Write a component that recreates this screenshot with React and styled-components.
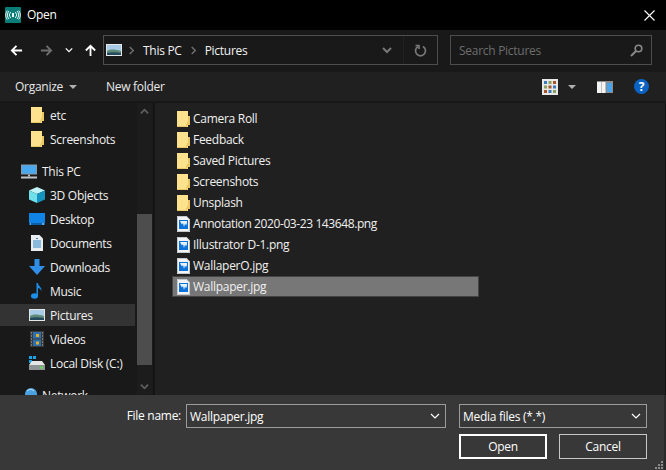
import React from 'react';
import styled, { createGlobalStyle } from 'styled-components';

const GlobalStyle = createGlobalStyle`
  html, body {
    margin: 0;
    padding: 0;
    background: #000;
  }
`;

const Dialog = styled.div`
  width: 666px;
  height: 470px;
  display: flex;
  flex-direction: column;
  overflow: hidden;
  background: #000;
  color: #fff;
  font-family: "Open Sans", "Noto Sans", sans-serif;
  font-size: 12px;
  letter-spacing: -0.28px;
`;

const TitleBar = styled.div`
  height: 30px;
  flex: none;
  display: flex;
  align-items: center;
  padding: 0 11px 0 5px;
  gap: 6px;
`;

const TitleText = styled.span`
  flex: 1;
  margin-bottom: 1px;
`;

const NavBar = styled.div`
  height: 42px;
  flex: none;
  box-sizing: border-box;
  display: flex;
  align-items: center;
  padding: 0 0 2px 9px;
  background: #191919;
`;

const NavButton = styled.div`
  display: flex;
  align-items: center;
  justify-content: center;
  width: ${({ width }) => width}px;
  margin-left: ${({ gap }) => gap || 0}px;
  color: ${({ dim }) => (dim ? '#6e6e6e' : '#fff')};
`;

const AddressBox = styled.div`
  width: 335px;
  height: 30px;
  margin-left: 6px;
  box-sizing: border-box;
  border: 1px solid #4d4d4d;
  display: flex;
  align-items: center;
  padding-left: 2px;
`;

const CrumbSep = styled.span`
  display: flex;
  margin-left: ${({ first }) => (first ? 5 : 0)}px;
  color: #707070;
`;

const Crumb = styled.span`
  color: #f2f2f2;
  margin: 0 7px;
`;

const AddressSpacer = styled.div`
  flex: 1;
`;

const AddressEnd = styled.div`
  width: ${({ width }) => width}px;
  height: 100%;
  display: flex;
  align-items: center;
  justify-content: center;
  color: #777;
  border-right: ${({ divided }) => (divided ? '1px solid #222' : 'none')};
`;

const SearchBox = styled.div`
  width: 202px;
  height: 30px;
  margin-left: 12px;
  box-sizing: border-box;
  border: 1px solid #4d4d4d;
  display: flex;
  align-items: center;
  justify-content: space-between;
  padding: 0 8px;
  color: #6d6d6d;
`;

const ToolBar = styled.div`
  height: 29px;
  flex: none;
  display: flex;
  align-items: center;
  padding: 0 17px 0 15px;
  background: #202020;
  border-bottom: 2px solid #171717;
  color: #e8e8e8;
`;

const ToolLabel = styled.span`
  display: flex;
  align-items: center;
  gap: 6px;
  margin-right: 29px;
`;

const Caret = styled.span`
  width: 0;
  height: 0;
  border-left: 4px solid transparent;
  border-right: 4px solid transparent;
  border-top: 4px solid #b0b0b0;
`;

const ToolSpacer = styled.div`
  flex: 1;
`;

const ViewCaret = styled(Caret)`
  margin: 0 21px 0 10px;
`;

const HelpDot = styled.span`
  width: 15px;
  height: 15px;
  margin-left: 21px;
  border-radius: 50%;
  background: #0a63c4;
  color: #fff;
  font-size: 12px;
  font-weight: 700;
  line-height: 15px;
  text-align: center;
`;

const Content = styled.div`
  flex: 1;
  min-height: 0;
  display: flex;
  border-right: 1px solid #111;
`;

const SidePane = styled.div`
  width: 153px;
  flex: none;
  display: flex;
  background: #191919;
  border-right: 2px solid #141414;
  overflow: hidden;
`;

const SideList = styled.div`
  width: 137px;
  flex: none;
`;

const SideRow = styled.div`
  height: ${({ active }) => (active ? 22 : 24)}px;
  margin: ${({ active }) => (active ? '1px 2px 1px 0' : '0')};
  margin-top: ${({ gapped }) => (gapped ? '8px' : undefined)};
  display: flex;
  align-items: center;
  gap: 5px;
  padding-left: ${({ level }) => (level ? 29 : 21)}px;
  background: ${({ active }) => (active ? '#333' : 'transparent')};
  color: #f0f0f0;
  white-space: nowrap;
`;

const IconSlot = styled.span`
  width: 16px;
  flex: none;
  display: flex;
  justify-content: center;
`;

const ScrollTrack = styled.div`
  width: 15px;
  flex: none;
  display: flex;
  flex-direction: column;
  align-items: center;
  background: #1c1c1c;
  color: #5e5e5e;
`;

const ScrollArrow = styled.div`
  height: 16px;
  display: flex;
  align-items: center;
  justify-content: center;
`;

const ScrollThumb = styled.div`
  width: 15px;
  height: 151px;
  margin-top: 95px;
  margin-bottom: 13px;
  background: #4d4d4d;
`;

const FilePane = styled.div`
  flex: 1;
  background: #202020;
  padding: 5px 0 0 17px;
`;

const FileRow = styled.div`
  width: 307px;
  height: 21px;
  box-sizing: border-box;
  display: flex;
  align-items: center;
  gap: 3px;
  color: #f0f0f0;
  background: ${({ selected }) => (selected ? '#777' : 'transparent')};
  border: ${({ selected }) => (selected ? '1px solid #444' : 'none')};
  padding-left: ${({ selected }) => (selected ? 4 : 5)}px;
  letter-spacing: ${({ tight }) => (tight ? '-0.4px' : 'inherit')};
`;

const BottomPanel = styled.div`
  height: 75px;
  flex: none;
  box-sizing: border-box;
  background: #383838;
  border-right: 2px solid #2a2a2a;
  padding: 9px 17px 0 0;
  display: flex;
  flex-direction: column;
  gap: 6px;
  position: relative;
`;

const NameRow = styled.div`
  display: flex;
  align-items: center;
  justify-content: flex-end;
`;

const FieldLabel = styled.span`
  margin-right: 5px;
  margin-bottom: 1px;
`;

const Field = styled.div`
  width: ${({ width }) => width}px;
  height: 24px;
  box-sizing: border-box;
  border: 1px solid #9b9b9b;
  display: flex;
  align-items: center;
  justify-content: space-between;
  padding: 0 5px 0 3px;
  margin-left: ${({ gap }) => gap || 0}px;
`;

const ButtonRow = styled.div`
  display: flex;
  justify-content: flex-end;
  gap: 12px;
`;

const DialogButton = styled.div`
  width: 88px;
  height: 25px;
  box-sizing: border-box;
  border: ${({ primary }) => (primary ? '2px solid #fff' : '1px solid #c8c8c8')};
  display: flex;
  align-items: center;
  justify-content: center;
`;

const Grip = styled.svg`
  position: absolute;
  right: 0;
  bottom: 0;
`;

const chevronPaths = {
  down: 'M1 3l4 4 4-4',
  up: 'M1 7l4-4 4 4',
  right: 'M3 1l4 4-4 4',
};

const Chevron = ({ size = 9, dir = 'down', width = 1.6 }) => (
  <svg width={size} height={size} viewBox="0 0 10 10" fill="none" stroke="currentColor" strokeWidth={width}>
    <path d={chevronPaths[dir]} />
  </svg>
);

const Arrow = ({ dir, size = 13 }) => {
  const d = {
    left: 'M13 7H2M7 2L2 7l5 5',
    right: 'M1 7h11M7 2l5 5-5 5',
    up: 'M7 13V2M2 7l5-5 5 5',
  }[dir];
  return (
    <svg width={size} height={size} viewBox="0 0 14 14" fill="none" stroke="currentColor" strokeWidth="2">
      <path d={d} />
    </svg>
  );
};

const AppLogo = () => (
  <svg width="16" height="16" viewBox="0 0 16 16">
    <rect width="16" height="16" rx="1" fill="#0a7d78" />
    <rect x="7" y="6" width="2" height="4" fill="#e8f5f4" />
    <g fill="none" stroke="#dff2f1" strokeWidth="1">
      <path d="M5.600 5a4.500 4.500 0 0 0 0 6M10.400 5a4.500 4.500 0 0 1 0 6" />
      <path d="M3.900 4a6.500 6.500 0 0 0 0 8M12.100 4a6.500 6.500 0 0 1 0 8" />
      <path d="M2.200 3.500a8 8 0 0 0 0 9M13.800 3.500a8 8 0 0 1 0 9" />
    </g>
  </svg>
);

const PicturesIcon = () => (
  <svg width="16" height="12" viewBox="0 0 16 12">
    <rect width="16" height="12" fill="#e4e6e8" />
    <rect x="1" y="1" width="14" height="10" fill="#a9cce6" />
    <path d="M1 7c3-2 7-2 14 0v4H1z" fill="#5f8a78" />
    <path d="M1 9c4-1 9-1 14 0v2H1z" fill="#24485c" />
  </svg>
);

const FolderIcon = () => (
  <svg width="13" height="16" viewBox="0 0 13 16">
    <path d="M0 0h11v5h2v8h-2v3H0z" fill="#fee28e" />
    <path d="M0 15h10v-2h3v-1h-2v-1h-1v4z" fill="#e8c35e" />
    <path d="M11 5h2v9h-3v2H0v-1h9v-2h2z" fill="#ecc864" />
  </svg>
);

const ImageFileIcon = () => (
  <svg width="13" height="16" viewBox="0 0 13 16">
    <path d="M0 0h9.500L13 3.500V16H0z" fill="#f2f4f6" />
    <path d="M0.500 0.500h8.800l3.200 3.200V15.500h-12z" fill="none" stroke="#c4c8cc" strokeWidth="1" />
    <rect x="2" y="4" width="9" height="9" fill="#0a72d8" />
    <path d="M3 5h7v2l-1 2.500-1-2-1 3.500-1-4-1 1.500-1-1.500z" fill="#e8f2fb" />
  </svg>
);

const MonitorIcon = () => (
  <svg width="16" height="15" viewBox="0 0 16 15">
    <rect y="0.500" width="16" height="10" fill="#8a9aa8" />
    <rect x="1" y="1.500" width="14" height="8" fill="#4aa8ee" />
    <rect x="7" y="10.500" width="2" height="2" fill="#b8b8b8" />
    <rect y="12.500" width="16" height="2" fill="#c0c4c8" />
  </svg>
);

const CubeIcon = () => (
  <svg width="16" height="16" viewBox="0 0 16 16">
    <path d="M8 0l8 3.500L8 7 0 3.500z" fill="#bff2f6" />
    <path d="M0 3.500L8 7v9L0 12.500z" fill="#6fe0ea" />
    <path d="M16 3.500L8 7v9l8-3.500z" fill="#1593c0" />
  </svg>
);

const DesktopIcon = () => (
  <svg width="16" height="12" viewBox="0 0 16 12">
    <rect width="16" height="12" fill="#0f84e6" />
    <rect y="10" width="16" height="2" fill="#0a5ea8" />
    <rect x="1" y="10.500" width="1" height="1" fill="#cfe8fb" />
    <rect x="13" y="10.500" width="2" height="1" fill="#cfe8fb" />
  </svg>
);

const DocumentIcon = () => (
  <svg width="12" height="16" viewBox="0 0 12 16">
    <path d="M0 0h8.500L12 3.500V16H0z" fill="#e9edf0" />
    <path d="M2 6h8M2 8h8M2 10h8M2 12h8" stroke="#2f86c8" strokeWidth="1" />
    <path d="M5 3.500h2" stroke="#2f86c8" strokeWidth="1" />
  </svg>
);

const DownloadIcon = () => (
  <svg width="16" height="16" viewBox="0 0 16 16">
    <path d="M5.500 0h5v7H16l-8 9-8-9h5.500z" fill="#2f8fe6" />
  </svg>
);

const MusicIcon = () => (
  <svg width="12" height="16" viewBox="0 0 12 16">
    <ellipse cx="3.500" cy="13" rx="3.500" ry="2.800" fill="#1d8ee8" />
    <path d="M5.500 0h1.500c0 3 4 4 3.500 8-.8-2-2.500-3-3.500-3v8H5.500z" fill="#1d8ee8" />
  </svg>
);

const VideoIcon = () => (
  <svg width="14" height="16" viewBox="0 0 14 16">
    <rect width="14" height="16" fill="#3a3a3a" />
    <rect x="3" y="1" width="8" height="6.500" fill="#2d6fb0" />
    <rect x="3" y="8.500" width="8" height="6.500" fill="#2d6fb0" />
    <rect x="6" y="3" width="3" height="3" fill="#d8b02c" />
    <rect x="6" y="10.500" width="3" height="3" fill="#d8b02c" />
    <path d="M1 2h1M1 5h1M1 8h1M1 11h1M1 14h1M12 2h1M12 5h1M12 8h1M12 11h1M12 14h1" stroke="#bbb" strokeWidth="1" />
  </svg>
);

const DiskIcon = () => (
  <svg width="16" height="14" viewBox="0 0 16 14">
    <rect x="0" y="0" width="3" height="3" fill="#16a6e8" />
    <rect x="4" y="0" width="3" height="3" fill="#16a6e8" />
    <rect x="0" y="4" width="3" height="3" fill="#16a6e8" />
    <path d="M3 5h10l3 4H0z" fill="#e6e6e6" />
    <rect y="9" width="16" height="5" fill="#8f9496" />
    <rect x="11" y="10.500" width="3" height="2" fill="#5ee04a" />
  </svg>
);

const NetworkIcon = () => (
  <svg width="16" height="16" viewBox="0 0 16 16">
    <circle cx="10" cy="7" r="6" fill="#4aa3e0" />
    <path d="M6 4c2-2 5-2 7 0" stroke="#cfe9fa" fill="none" />
    <rect x="0" y="9" width="10" height="6" fill="#7db8e0" />
  </svg>
);

const ViewsIcon = () => {
  const colors = ['#3a7ab8', '#8aa060', '#a8552c'];
  return (
    <svg width="16" height="16" viewBox="0 0 16 16">
      <rect width="16" height="16" fill="#e8e8e8" />
      {[0, 1, 2].map((row) =>
        [0, 1, 2].map((col) => (
          <rect key={`${row}${col}`} x={2 + col * 4.500} y={2 + row * 4.500} width="3" height="3" fill={colors[(row + col) % 3]} />
        ))
      )}
    </svg>
  );
};

const PreviewIcon = () => (
  <svg width="16" height="12" viewBox="0 0 16 12">
    <rect width="16" height="12" fill="#8c8c8c" />
    <rect x="0" y="1" width="4" height="11" fill="#f4f4f4" />
    <rect x="4.500" y="1" width="4" height="11" fill="#f4f4f4" />
    <rect x="10" y="2" width="5" height="9" fill="#49a4ec" />
  </svg>
);

const RefreshIcon = () => (
  <svg width="13" height="13" viewBox="0 0 13 13" fill="none" stroke="currentColor" strokeWidth="1.700">
    <path d="M4 2.500a5 5 0 1 0 5 0" />
    <path d="M1.500 1.500H5V5" />
  </svg>
);

const SearchIcon = () => (
  <svg width="13" height="13" viewBox="0 0 13 13" fill="none" stroke="#8a8a8a" strokeWidth="1.600">
    <circle cx="8.500" cy="4.500" r="3.300" />
    <path d="M6 7L1 12" strokeWidth="2" />
  </svg>
);

const CloseIcon = () => (
  <svg width="11" height="11" viewBox="0 0 11 11" stroke="#fff" strokeWidth="1.100">
    <path d="M0.500 0.500l10 10M10.500 0.500l-10 10" />
  </svg>
);

const sideItems = [
  { label: 'etc', icon: <FolderIcon />, level: 1 },
  { label: 'Screenshots', icon: <FolderIcon />, level: 1 },
  { label: 'This PC', icon: <MonitorIcon />, gapped: true },
  { label: '3D Objects', icon: <CubeIcon />, level: 1 },
  { label: 'Desktop', icon: <DesktopIcon />, level: 1 },
  { label: 'Documents', icon: <DocumentIcon />, level: 1 },
  { label: 'Downloads', icon: <DownloadIcon />, level: 1 },
  { label: 'Music', icon: <MusicIcon />, level: 1 },
  { label: 'Pictures', icon: <PicturesIcon />, level: 1, active: true },
  { label: 'Videos', icon: <VideoIcon />, level: 1 },
  { label: 'Local Disk (C:)', icon: <DiskIcon />, level: 1 },
  { label: 'Network', icon: <NetworkIcon />, gapped: true },
];

const fileItems = [
  { name: 'Camera Roll', folder: true },
  { name: 'Feedback', folder: true },
  { name: 'Saved Pictures', folder: true },
  { name: 'Screenshots', folder: true },
  { name: 'Unsplash', folder: true },
  { name: 'Annotation 2020-03-23 143648.png', tight: true },
  { name: 'Illustrator D-1.png' },
  { name: 'WallaperO.jpg' },
  { name: 'Wallpaper.jpg', selected: true },
];

const App = () => (
  <Dialog>
    <GlobalStyle />
    <TitleBar>
      <AppLogo />
      <TitleText>Open</TitleText>
      <CloseIcon />
    </TitleBar>
    <NavBar>
      <NavButton width={14}><Arrow dir="left" /></NavButton>
      <NavButton width={14} gap={16} dim><Arrow dir="right" /></NavButton>
      <NavButton width={10} gap={11}><Chevron size={8} /></NavButton>
      <NavButton width={14} gap={9}><Arrow dir="up" /></NavButton>
      <AddressBox>
        <PicturesIcon />
        <CrumbSep first><Chevron dir="right" /></CrumbSep>
        <Crumb>This PC</Crumb>
        <CrumbSep><Chevron dir="right" /></CrumbSep>
        <Crumb>Pictures</Crumb>
        <AddressSpacer />
        <AddressEnd width={33} divided><Chevron size={10} width={2} /></AddressEnd>
        <AddressEnd width={33}><RefreshIcon /></AddressEnd>
      </AddressBox>
      <SearchBox>
        Search Pictures
        <SearchIcon />
      </SearchBox>
    </NavBar>
    <ToolBar>
      <ToolLabel>Organize <Caret /></ToolLabel>
      <ToolLabel>New folder</ToolLabel>
      <ToolSpacer />
      <ViewsIcon />
      <ViewCaret />
      <PreviewIcon />
      <HelpDot>?</HelpDot>
    </ToolBar>
    <Content>
      <SidePane>
        <SideList>
          {sideItems.map((item) => (
            <SideRow key={item.label} level={item.level} active={item.active} gapped={item.gapped}>
              <IconSlot>{item.icon}</IconSlot>
              {item.label}
            </SideRow>
          ))}
        </SideList>
        <ScrollTrack>
          <ScrollArrow><Chevron size={9} dir="up" width={2} /></ScrollArrow>
          <ScrollThumb />
          <ScrollArrow><Chevron size={9} width={2} /></ScrollArrow>
        </ScrollTrack>
      </SidePane>
      <FilePane>
        {fileItems.map((file) => (
          <FileRow key={file.name} selected={file.selected} tight={file.tight}>
            {file.folder ? <FolderIcon /> : <ImageFileIcon />}
            {file.name}
          </FileRow>
        ))}
      </FilePane>
    </Content>
    <BottomPanel>
      <NameRow>
        <FieldLabel>File name:</FieldLabel>
        <Field width={260}>
          Wallpaper.jpg
          <Chevron size={10} width={1.2} />
        </Field>
        <Field width={188} gap={13}>
          Media files (*.*)
          <Chevron size={10} width={1.2} />
        </Field>
      </NameRow>
      <ButtonRow>
        <DialogButton primary>Open</DialogButton>
        <DialogButton>Cancel</DialogButton>
      </ButtonRow>
      <Grip width="10" height="10" viewBox="0 0 10 10" fill="#8a8a8a">
        <rect x="7" y="1" width="2" height="2" />
        <rect x="4" y="4" width="2" height="2" />
        <rect x="7" y="4" width="2" height="2" />
        <rect x="1" y="7" width="2" height="2" />
        <rect x="4" y="7" width="2" height="2" />
        <rect x="7" y="7" width="2" height="2" />
      </Grip>
    </BottomPanel>
  </Dialog>
);

export default App;
